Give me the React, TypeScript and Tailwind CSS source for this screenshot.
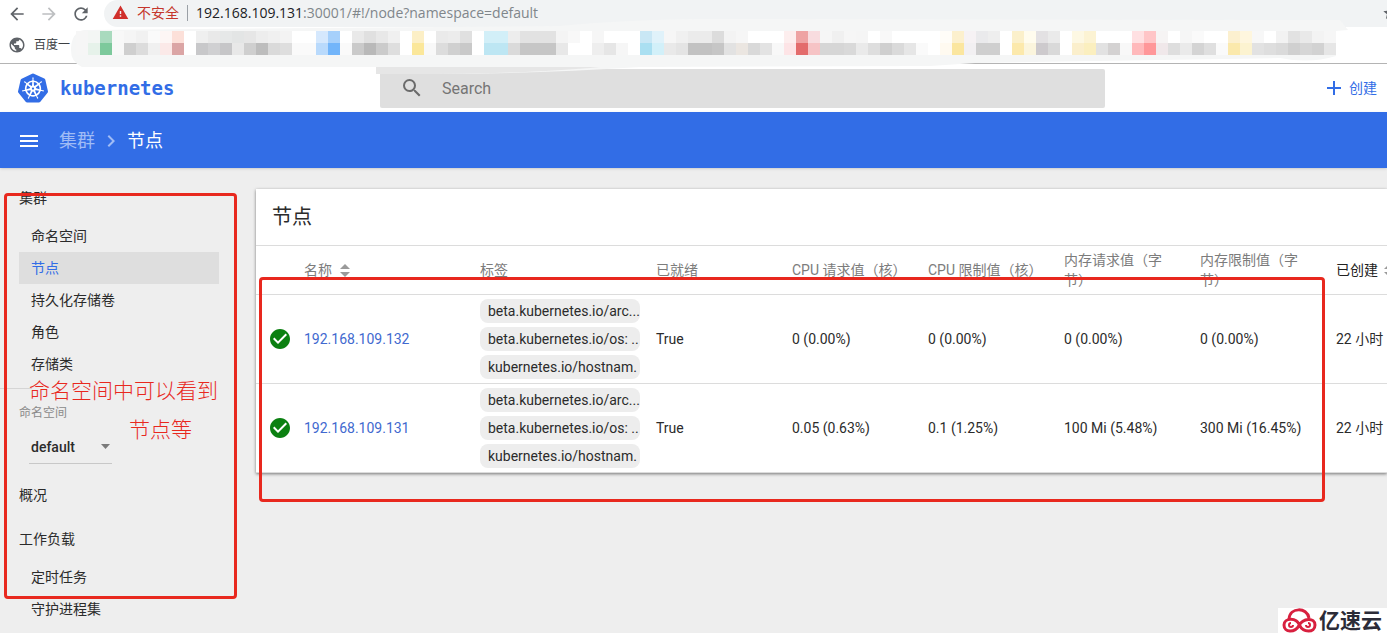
import React from 'react'
import {
  MdAdd,
  MdArrowBack,
  MdArrowForward,
  MdCheckCircle,
  MdChevronRight,
  MdMenu,
  MdPublic,
  MdRefresh,
  MdSearch,
  MdStar,
  MdWarning,
} from 'react-icons/md'
import { SiKubernetes } from 'react-icons/si'

const clusterItems = ['命名空间', '节点', '持久化存储卷', '角色', '存储类']
const workloadItems = ['定时任务', '守护进程集']

const labels = ['beta.kubernetes.io/arc...', 'beta.kubernetes.io/os: ..', 'kubernetes.io/hostnam.']

const nodes = [
  {
    name: '192.168.109.132',
    ready: 'True',
    usage: ['0 (0.00%)', '0 (0.00%)', '0 (0.00%)', '0 (0.00%)'],
    age: '22 小时',
  },
  {
    name: '192.168.109.131',
    ready: 'True',
    usage: ['0.05 (0.63%)', '0.1 (1.25%)', '100 Mi (5.48%)', '300 Mi (16.45%)'],
    age: '22 小时',
  },
]

// blurred bookmarks, 12px cells, one line per group of columns
const mosaicTop = `
f6f6f6 f3f6f4 a9dabe f8f8f8 f5f5f5 f1f1f1 fafafa fdf6f5 fce0d9 ffffff
efefef e9e9e9 e6e8e8 e3e5e5 e6e6e6 ededed f0f0f0 f3f3f3 ffffff ffffff
d5e8fd a6d0fb ffffff e9e9e9 e0e0e0 e8e8e8 f0f0f0 ffffff fcefc6 ffffff
eaeaea ececec e0e0e0 ffffff d2eff8 d2eff8 ededed e2e2e2 e2e2e2 e2e2e2
f4f4f4 f8f8f8 ffffff f6f6f6 ffffff ffffff ffffff c9e7f5 e0f2fa f6f6f6
f0f0f0 ebebeb ebebeb dcdcdc f3f3f3 f6f6f6 ffffff ffffff ffffff fdeeee
eea3a3 f8dcdf f6f6f6 f0f0f0 f6f6f6 f5f5f5 ffffff f8f8f8 ffffff ffffff
ffffff ffffff fffdf8 fcf0cd f6f2f4 eaeaec eeeeee ffffff fbf0cb fffcee
e3e1e3 eaeaea ffffff fdf8e3 fcf3d3 ffffff ffffff ffffff ffe0e2 ffc5c7
f6f4f4 ffffff f6f6f6 fafafa ffffff ffffff fcf0cf fef6de f7f7f7 ffffff
f2f2f2 e2e2e2 e9e9e9 f3f3f3 f6f6f6`
const mosaicBottom = `
f6f6f6 e6f2ea 7dc99c f8f8f8 cfcfcf dcdcdc f0f0f0 fbe9e8 dba5a5 ffffff
c8c8ca d0d0d2 c6c6c8 e8e8e8 cfcfcf bdbdbd dadada dedede fafafa fafafa
b9dafc 72b5fa fafafa cacaca b9b9b9 cbcbcb dedede ffffff fbe79a f8f8f8
dcdcdc d0d0d0 c9c9c9 ffffff bde6f3 bde6f3 dadada c6c6c6 c6c6c6 c6c6c6
e8e8e8 ffffff ffffff eeeeee e6e6e6 f6f6f6 ffffff aadff1 d2f0f9 e9e9e9
e4e4e4 c2c2c2 c2c2c2 c6c6c6 e2e2e2 ebe6e1 d9d9d9 e3e3e3 f8f8f8 fde4e6
e36c6c f6c3c5 d6d6d6 d6d6d6 d9d9d9 eaeaea dedede cfcfcf dadada e6e6e6
fafafa ffffff fffaf0 fbe69f f2f0f2 cfcfcf cfcfcf ffffff fce9ac fbf5dd
cdcacd d9d9d9 ffffff fbefcc fbefbf e2e2e2 d4d2d2 f8f8f8 ffb9bb ff9799
f0e8ea dedede eaeaea d4d4d4 dfdfdf fafafa fbe9ac fcf3d0 e2e2e2 dedede
dadada d0d0d0 d6d6d6 d2d2d2 e6e6e6`

function cells(rows: string) {
  return rows.trim().split(/\s+/)
}

function BookmarkBlur() {
  return (
    <svg
      className="pointer-events-none absolute top-0 left-0 h-20 w-[1387px]"
      viewBox="0 0 1387 80"
      aria-hidden="true"
    >
      <path
        d="M84 30 L560 26 Q620 20 700 19 L1340 20 L1348 30 L1336 31 L1336 56 Q1310 64 1280 58 L975 63 L930 66 L640 67 Q500 76 380 73 L376 67 L82 67 Q70 62 71 48 Q72 32 84 30Z"
        fill="#f5f6f6"
      />
      <path d="M376 67 H600 Q520 75 376 74Z" fill="#e6e6e6" />
      {cells(mosaicTop).map((color, i) => (
        <rect key={i} x={76 + i * 12} y="31" width="12" height="12" fill={'#' + color} />
      ))}
      {cells(mosaicBottom).map((color, i) => (
        <rect key={i} x={76 + i * 12} y="43" width="12" height="12" fill={'#' + color} />
      ))}
    </svg>
  )
}

function BrowserBar() {
  return (
    <div className="relative bg-white font-['Open_Sans','Noto_Sans_CJK_SC',sans-serif]">
      <div className="flex h-[27px] items-center">
        <div className="flex w-[104px] shrink-0 items-center gap-3 pl-[7px] text-[#5f6368]">
          <button aria-label="Back">
            <MdArrowBack size={20} />
          </button>
          <button aria-label="Forward" className="text-[#bdbfc1]">
            <MdArrowForward size={20} />
          </button>
          <button aria-label="Reload">
            <MdRefresh size={20} />
          </button>
        </div>
        <div className="flex h-full flex-1 items-center rounded-l-full bg-[#f1f3f4] pb-0.5 pl-2 text-sm">
          <MdWarning size={17} className="text-[#d0302c]" />
          <span className="ml-2 text-[#c5362c]">不安全</span>
          <span className="mx-2 h-4 w-px bg-[#9aa0a6]" />
          <span className="text-[#80868b]">
            <span className="text-[#202124]">192.168.109.131</span>
            :30001/#!/node?namespace=default
          </span>
          <MdStar size={16} className="-mr-[11px] ml-auto text-[#5f6368]" />
        </div>
      </div>
      <div className="flex h-[37px] items-center gap-2 border-b border-[#b4b4b4] pl-2 text-xs text-[#3c4043]">
        <MdPublic size={18} className="text-[#5f6368]" />
        <a href="#baidu">百度一</a>
      </div>
      <BookmarkBlur />
    </div>
  )
}

function Header() {
  return (
    <header className="flex h-12 items-center bg-white">
      <a href="#home" className="flex w-[380px] shrink-0 items-center gap-3 pl-[18px] text-[#326de6]">
        <SiKubernetes size={30} />
        <span className="pt-0.5 font-['DejaVu_Sans_Mono',monospace] text-[19px] font-bold">kubernetes</span>
      </a>
      <label className="flex h-[39px] flex-1 items-center gap-[18px] rounded-xs bg-[#dfdfdf] pl-5">
        <MdSearch size={24} className="text-[#6b6b6b]" />
        <input
          type="search"
          placeholder="Search"
          aria-label="Search"
          className="flex-1 bg-transparent pt-0.5 text-base outline-none placeholder:text-[#757575]"
        />
      </label>
      <div className="flex w-[282px] justify-end pr-[10px]">
        <button className="flex items-center gap-[3px] text-[#326de6]">
          <MdAdd size={24} />
          创建
        </button>
      </div>
    </header>
  )
}

function SideLink({ text, active }: { text: string; active?: boolean }) {
  return (
    <a
      href={'#' + text}
      className={
        active
          ? 'flex h-8 items-center bg-[#dedede] pl-3 text-[#326de6]'
          : 'flex h-8 items-center pl-3'
      }
    >
      {text}
    </a>
  )
}

function Sidebar() {
  return (
    <nav className="w-64 shrink-0 pt-2">
      <div className="px-[19px] pr-[37px]">
        <a href="#cluster" className="flex h-11 items-center">
          集群
        </a>
        {clusterItems.map((item) => (
          <SideLink key={item} text={item} active={item === '节点'} />
        ))}
      </div>
      <div className="mt-2 h-px w-8 bg-[#d5d5d5]" />
      <div className="px-[19px] pt-[14px] pr-[37px]">
        <label htmlFor="namespace" className="block text-xs leading-5 text-[#8a8a8a]">
          命名空间
        </label>
        <div className="relative mt-[7px] ml-[10px] w-[83px]">
          <select
            id="namespace"
            className="h-[34px] w-full appearance-none border-b border-[#c8c8c8] pl-[2px] font-medium outline-none"
          >
            <option>default</option>
          </select>
          <svg
            className="pointer-events-none absolute top-[14px] right-[2px]"
            width="9"
            height="5"
            viewBox="0 0 9 5"
          >
            <path d="M0 0H9L4.5 5Z" fill="#7a7a7a" />
          </svg>
        </div>
        <a href="#overview" className="mt-[9px] flex h-11 items-center">
          概况
        </a>
        <a href="#workloads" className="flex h-11 items-center">
          工作负载
        </a>
        {workloadItems.map((item) => (
          <SideLink key={item} text={item} />
        ))}
      </div>
    </nav>
  )
}

function SortIcon() {
  return (
    <svg width="10" height="13" viewBox="0 0 10 13" className="shrink-0">
      <path d="M0 5L5 0L10 5Z" fill="#9a9a9a" />
      <path d="M0 8H10L5 13Z" fill="#9a9a9a" />
    </svg>
  )
}

function NodeTable() {
  return (
    <table className="w-[1184px] table-fixed text-left">
      <colgroup>
        <col className="w-12" />
        <col className="w-44" />
        <col className="w-44" />
        <col className="w-[136px]" />
        <col className="w-[136px]" />
        <col className="w-[136px]" />
        <col className="w-[136px]" />
        <col className="w-[136px]" />
        <col className="w-[104px]" />
      </colgroup>
      <thead>
        <tr className="h-[49px] border-y border-[#dcdcdc] leading-5 text-[#7c7c7c] *:font-normal">
          <th />
          <th>
            <button className="flex items-center gap-2">
              名称
              <SortIcon />
            </button>
          </th>
          <th>标签</th>
          <th>已就绪</th>
          <th>CPU 请求值（核）</th>
          <th>CPU 限制值（核）</th>
          <th className="pr-6">内存请求值（字节）</th>
          <th className="pr-6">内存限制值（字节）</th>
          <th className="text-[#212121]">
            <button className="flex items-center gap-[6px]">
              已创建
              <SortIcon />
            </button>
          </th>
        </tr>
      </thead>
      <tbody>
        {nodes.map((node) => (
          <tr key={node.name} className="h-[89px] border-b border-[#dcdcdc]">
            <td className="pl-3">
              <MdCheckCircle size={24} className="text-[#0b8011]" />
            </td>
            <td>
              <a href={'#' + node.name} className="text-[#4169cf]">
                {node.name}
              </a>
            </td>
            <td className="pr-4">
              <ul className="flex flex-col gap-1">
                {labels.map((label) => (
                  <li key={label} className="rounded-lg bg-[#ededed] pl-2 leading-6 whitespace-nowrap">
                    {label}
                  </li>
                ))}
              </ul>
            </td>
            <td>{node.ready}</td>
            {node.usage.map((value, i) => (
              <td key={i}>{value}</td>
            ))}
            <td>{node.age}</td>
          </tr>
        ))}
      </tbody>
    </table>
  )
}

export default function App() {
  return (
    <div className="relative min-h-screen overflow-hidden bg-[#eeeeee] font-[Roboto,'Noto_Sans_CJK_SC',sans-serif] text-sm text-[#2b2b2b]">
      <BrowserBar />
      <Header />
      <div className="flex h-14 items-center bg-[#326de6] pt-0.5 pl-[17px] text-lg text-white shadow-sm">
        <button aria-label="Menu">
          <MdMenu size={24} />
        </button>
        <a href="#cluster" className="ml-[18px] text-[#a0bcf5]">
          集群
        </a>
        <MdChevronRight size={24} className="mx-1 text-[#a0bcf5]" />
        <span>节点</span>
      </div>
      <div className="flex">
        <Sidebar />
        <main className="min-w-0 flex-1 pt-[21px]">
          <section className="overflow-hidden bg-white shadow-[0_1px_3px_#00000080]">
            <h1 className="flex h-14 items-center pl-4 text-xl">节点</h1>
            <NodeTable />
          </section>
        </main>
      </div>

      {/* red marks drawn over the page */}
      <div className="pointer-events-none absolute top-[193px] left-1 h-[406px] w-[233px] rounded-sm border-3 border-[#e8281e]" />
      <div className="pointer-events-none absolute top-[277px] left-[259px] h-[225px] w-[1066px] rounded-sm border-3 border-[#e8281e]" />
      <p className="pointer-events-none absolute top-[371px] left-[29px] text-[21px] leading-10 font-light text-[#e8281e]">
        命名空间中可以看到
      </p>
      <p className="pointer-events-none absolute top-[410px] left-[129px] text-[21px] leading-10 font-light text-[#e8281e]">
        节点等
      </p>

      <div className="absolute right-0 bottom-0 flex h-[25px] w-[109px] items-center gap-[2px] bg-white pl-1">
        <svg width="35" height="25" viewBox="0 0 35 25" fill="none" stroke="#d8203f" strokeWidth="3">
          <path d="M7 11C8 -1 25 -1 27 10" />
          <path d="M17.500 17C14 9 2 10 2 17C2 25 13 25 17 17.500S33 9 33 17C33 25 21 25 17.500 17" />
          <path d="M9 15A2 2 0 1 0 11 17" strokeWidth="2" />
          <path d="M26 15A2 2 0 1 1 24 17" strokeWidth="2" />
        </svg>
        <span className="text-[21px] leading-6 font-bold text-[#2c2c38]">亿速云</span>
      </div>
    </div>
  )
}
